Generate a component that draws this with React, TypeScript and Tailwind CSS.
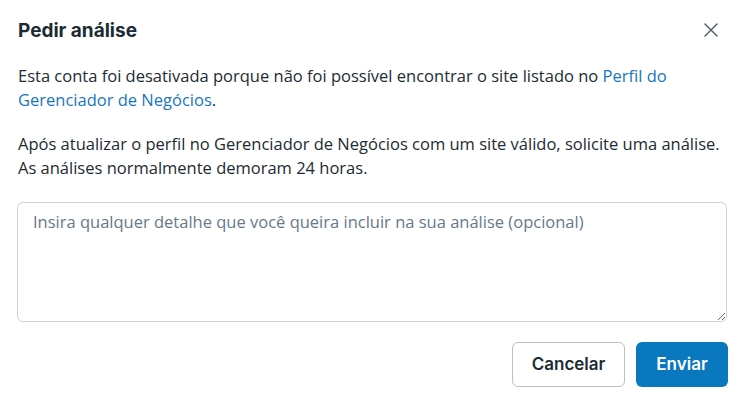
import React, { useState } from "react";

const body = { fontFamily: '"Open Sans", "Noto Sans", sans-serif' };
const display = { fontFamily: 'Inter, Roboto, sans-serif' };

export default function App() {
  const [details, setDetails] = useState("");

  return (
    <div className="w-[738px] h-[401px] bg-white text-[#1c2b33] overflow-hidden">
      <div className="pl-[18px] pr-[11px] pt-[18px]">
        {/* Header */}
        <div className="flex items-center justify-between h-[24px]">
          <h2 className="text-[19px] font-bold leading-[24px] mt-[1px]" style={display}>
            Pedir análise
          </h2>
          <button className="w-[24px] h-[24px] mr-[4px] flex items-center justify-center text-[#465a69]">
            <svg width="16" height="16" viewBox="0 0 16 16" fill="none" stroke="currentColor" strokeWidth="1.4" strokeLinecap="round">
              <path d="M2 2l12 12M14 2L2 14" />
            </svg>
          </button>
        </div>

        {/* Body */}
        <div className="mt-[22px] text-[16.5px] leading-[24px] whitespace-nowrap" style={body}>
          <p>
            Esta conta foi desativada porque não foi possível encontrar o site listado no{" "}
            <a className="text-[#1876bd]" href="#">Perfil do</a>
            <br />
            <a className="text-[#1876bd]" href="#">Gerenciador de Negócios</a>.
          </p>
          <p className="mt-[20px]">
            Após atualizar o perfil no Gerenciador de Negócios com um site válido, solicite uma análise.
            <br />
            As análises normalmente demoram 24 horas.
          </p>
        </div>

        <textarea
          value={details}
          onChange={(e) => setDetails(e.target.value)}
          placeholder="Insira qualquer detalhe que você queira incluir na sua análise (opcional)"
          className="mt-[22px] block w-[710px] h-[120px] -ml-[1px] rounded-[6px] border border-[#cbd2d9] px-[15px] pt-[7px] pb-[8px] text-[16.5px] leading-[24px] placeholder:text-[#67788a] outline-none"
          style={body}
        />

        {/* Actions */}
        <div className="mt-[20px] flex justify-end gap-[11px] w-[710px]">
          <button
            className="h-[45px] w-[113px] rounded-[6px] border border-[#b9c1c8] bg-white text-[17px] font-semibold text-[#1c2b33]"
            style={display}
          >
            Cancelar
          </button>
          <button
            className="h-[45px] w-[92px] rounded-[6px] bg-[#0a78be] text-[17px] font-semibold text-white"
            style={display}
          >
            Enviar
          </button>
        </div>
      </div>
    </div>
  );
}
